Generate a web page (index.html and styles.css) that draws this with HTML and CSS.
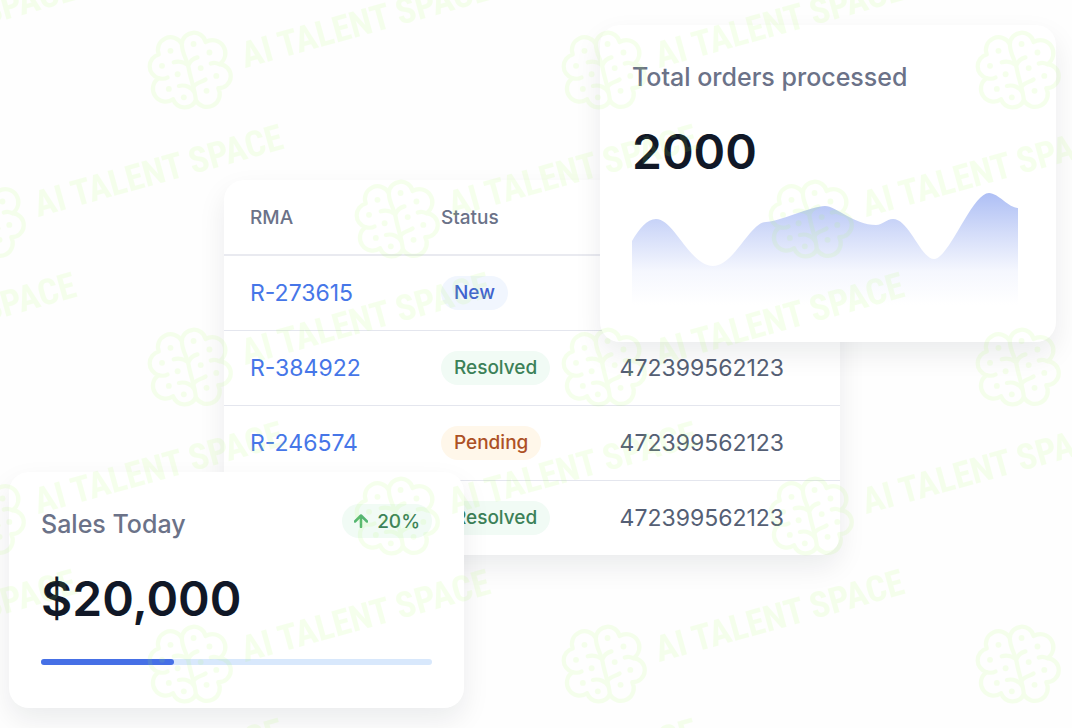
FILE: index.html
```html
<!DOCTYPE html>
<html lang="en">
<head>
  <meta charset="utf-8">
  <meta name="viewport" content="width=device-width,initial-scale=1">
  <title>Returns overview</title>
  <link rel="stylesheet" href="styles.css">
</head>
<body>
  <main class="board">
    <section class="card returns">
      <table>
        <thead>
          <tr><th class="col-rma">RMA</th><th class="col-status">Status</th><td></td></tr>
        </thead>
        <tbody>
          <tr><td><a href="#">R-273615</a></td><td><span class="badge new">New</span></td><td></td></tr>
          <tr><td><a href="#">R-384922</a></td><td><span class="badge resolved">Resolved</span></td><td>472399562123</td></tr>
          <tr><td><a href="#">R-246574</a></td><td><span class="badge pending">Pending</span></td><td>472399562123</td></tr>
          <tr><td></td><td><span class="badge resolved">Resolved</span></td><td>472399562123</td></tr>
        </tbody>
      </table>
    </section>

    <section class="card stat orders">
      <h2>Total orders processed</h2>
      <p class="value">2000</p>
      <svg class="chart" viewBox="0 0 386 112" preserveAspectRatio="none" aria-hidden="true">
        <defs>
          <linearGradient id="fill" x1="0" y1="0" x2="0" y2="1">
            <stop offset="0" stop-color="#aebff5"/>
            <stop offset=".35" stop-color="#d3dcf9"/>
            <stop offset=".7" stop-color="#f5f7fe"/>
            <stop offset="1" stop-color="#ffffff"/>
          </linearGradient>
        </defs>
        <path fill="url(#fill)" d="M0 48C7 36 15 26 24 26C42 26 58 73 81 73C102 73 118 29 134 29C146 29 180 13 193 13C204 13 222 32 244 32C251 32 254 26 261 26C277 26 289 66 302 66C317 66 340 0 357 0C366 0 377 15 386 15V112H0Z"/>
      </svg>
    </section>

    <section class="card stat sales">
      <div class="row">
        <h2>Sales Today</h2>
        <span class="badge growth">
          <svg class="arrow" viewBox="0 0 14 14" aria-hidden="true"><path d="M7 13V2M1 7.500L7 1.500L13 7.500"/></svg>
          20%
        </span>
      </div>
      <p class="value">$20,000</p>
      <div class="bar"><div class="bar-fill" style="width:34%"></div></div>
    </section>
  </main>

  <!-- repeating brand stamp, two interleaved grids -->
  <svg class="watermark" aria-hidden="true">
    <defs>
      <g id="stamp">
        <g class="brain" transform="translate(50 111) scale(.3250) translate(-129 -131)">
          <path d="M107 48A37 37 0 0 1 180 42A39 39 0 0 1 222 110A37 37 0 0 1 219 184A37 37 0 0 1 150 221A38 38 0 0 1 80 218A38 38 0 0 1 35 153A38 38 0 0 1 36 80A39 39 0 0 1 107 48"/>
          <path d="M107 48C107 80 124 95 128 122S148 190 150 221"/>
          <path d="M82 104C98 100 116 104 125 112M98 177C118 172 138 182 145 196M35 153C46 156 56 155 63 151"/>
          <path d="M128 112C134 96 144 92 155 89M142 182C148 166 168 166 180 157M222 110C212 105 204 105 196 108"/>
          <g class="dots">
            <circle cx="72" cy="69" r="9"/><circle cx="143" cy="48" r="9"/><circle cx="192" cy="74" r="9"/>
            <circle cx="165" cy="122" r="9"/><circle cx="213" cy="146" r="9"/><circle cx="183" cy="192" r="9"/>
            <circle cx="113" cy="212" r="9"/><circle cx="67" cy="186" r="9"/><circle cx="94" cy="141" r="9"/>
            <circle cx="46" cy="115" r="9"/>
          </g>
        </g>
        <text transform="translate(106 108) rotate(-15.500)">AI TALENT SPACE</text>
      </g>
      <pattern id="odd" x="139" y="-40" width="414" height="297" patternUnits="userSpaceOnUse"><use href="#stamp"/></pattern>
      <pattern id="even" x="346" y="109" width="414" height="297" patternUnits="userSpaceOnUse"><use href="#stamp"/></pattern>
    </defs>
    <rect width="100%" height="100%" fill="url(#odd)"/>
    <rect width="100%" height="100%" fill="url(#even)"/>
  </svg>
</body>
</html>
```

FILE: styles.css
```css
* { box-sizing: border-box; }
body { margin: 0; background: #fefefe; font-family: Inter, "Liberation Sans", sans-serif; color: #555f75; }
h2, p { margin: 0; }

/* the three cards share one row and overlap */
.board { display: grid; grid-template-columns: 215fr 240fr 136fr 240fr 216fr; align-items: start; padding: 25px 16px 20px 9px; }
.card { grid-row: 1; background: #fff; border-radius: 20px; box-shadow: 0 12px 28px rgba(17, 24, 39, .08); }
.returns { grid-column: 2 / 5; margin-top: 155px; }
.orders { grid-column: 4 / 6; }
.sales { grid-column: 1 / 3; margin-top: 447px; }

table { width: 100%; table-layout: fixed; border-collapse: collapse; font-size: 23px; }
th, td { height: 75px; padding: 0 0 0 26px; text-align: left; border-bottom: 1px solid #e4e6ee; }
thead th, thead td { border-bottom: 2px solid #e9eaf0; }
tbody tr:last-child td { border-bottom: 0; }
th { font-size: 19px; font-weight: 500; color: #6b7288; }
.col-rma { width: 31%; }
.col-status { width: 29%; }
a { color: #4676e8; text-decoration: none; }

.badge { display: inline-flex; align-items: center; height: 34px; padding: 0 13px; border-radius: 17px; font-size: 19px; font-weight: 500; }
.new { background: #f1f6fe; color: #3f62cf; }
.resolved { background: #f1fbf5; color: #3c8158; }
.pending { background: #fff7ea; color: #ad5125; }
.growth { gap: 9px; padding: 0 12px; background: #f1fbf5; color: #3c8158; }
.arrow { width: 14px; height: 14px; fill: none; stroke: #55b571; stroke-width: 2.5; stroke-linecap: round; stroke-linejoin: round; }

.stat { padding: 32px; }
.stat h2 { font-size: 25px; line-height: 40px; font-weight: 500; color: #6b7288; }
.value { font-size: 48px; line-height: 60px; font-weight: 600; color: #111827; }
.orders .value { margin: 25px 0 11px; }
.orders { padding-right: 38px; padding-bottom: 37px; }
.chart { display: block; width: 100%; height: 112px; }
.row { display: flex; justify-content: space-between; align-items: flex-start; height: 40px; }
.sales .value { margin: 25px 0 30px; }
.sales { padding-bottom: 43px; }
.bar { height: 6px; border-radius: 3px; background: #d8e8fc; }
.bar-fill { height: 6px; border-radius: 3px; background: #4670e6; }

.watermark { position: absolute; top: 0; left: 0; width: 100%; height: 100%; opacity: .1; pointer-events: none; }
.watermark text { font-family: "Roboto Condensed", Lato, sans-serif; font-size: 36px; font-weight: 700; fill: #a8ff50; }
.brain { fill: none; stroke: #a8ff50; stroke-width: 13; stroke-linecap: round; stroke-linejoin: round; }
.dots { fill: #a8ff50; stroke: none; }
```
